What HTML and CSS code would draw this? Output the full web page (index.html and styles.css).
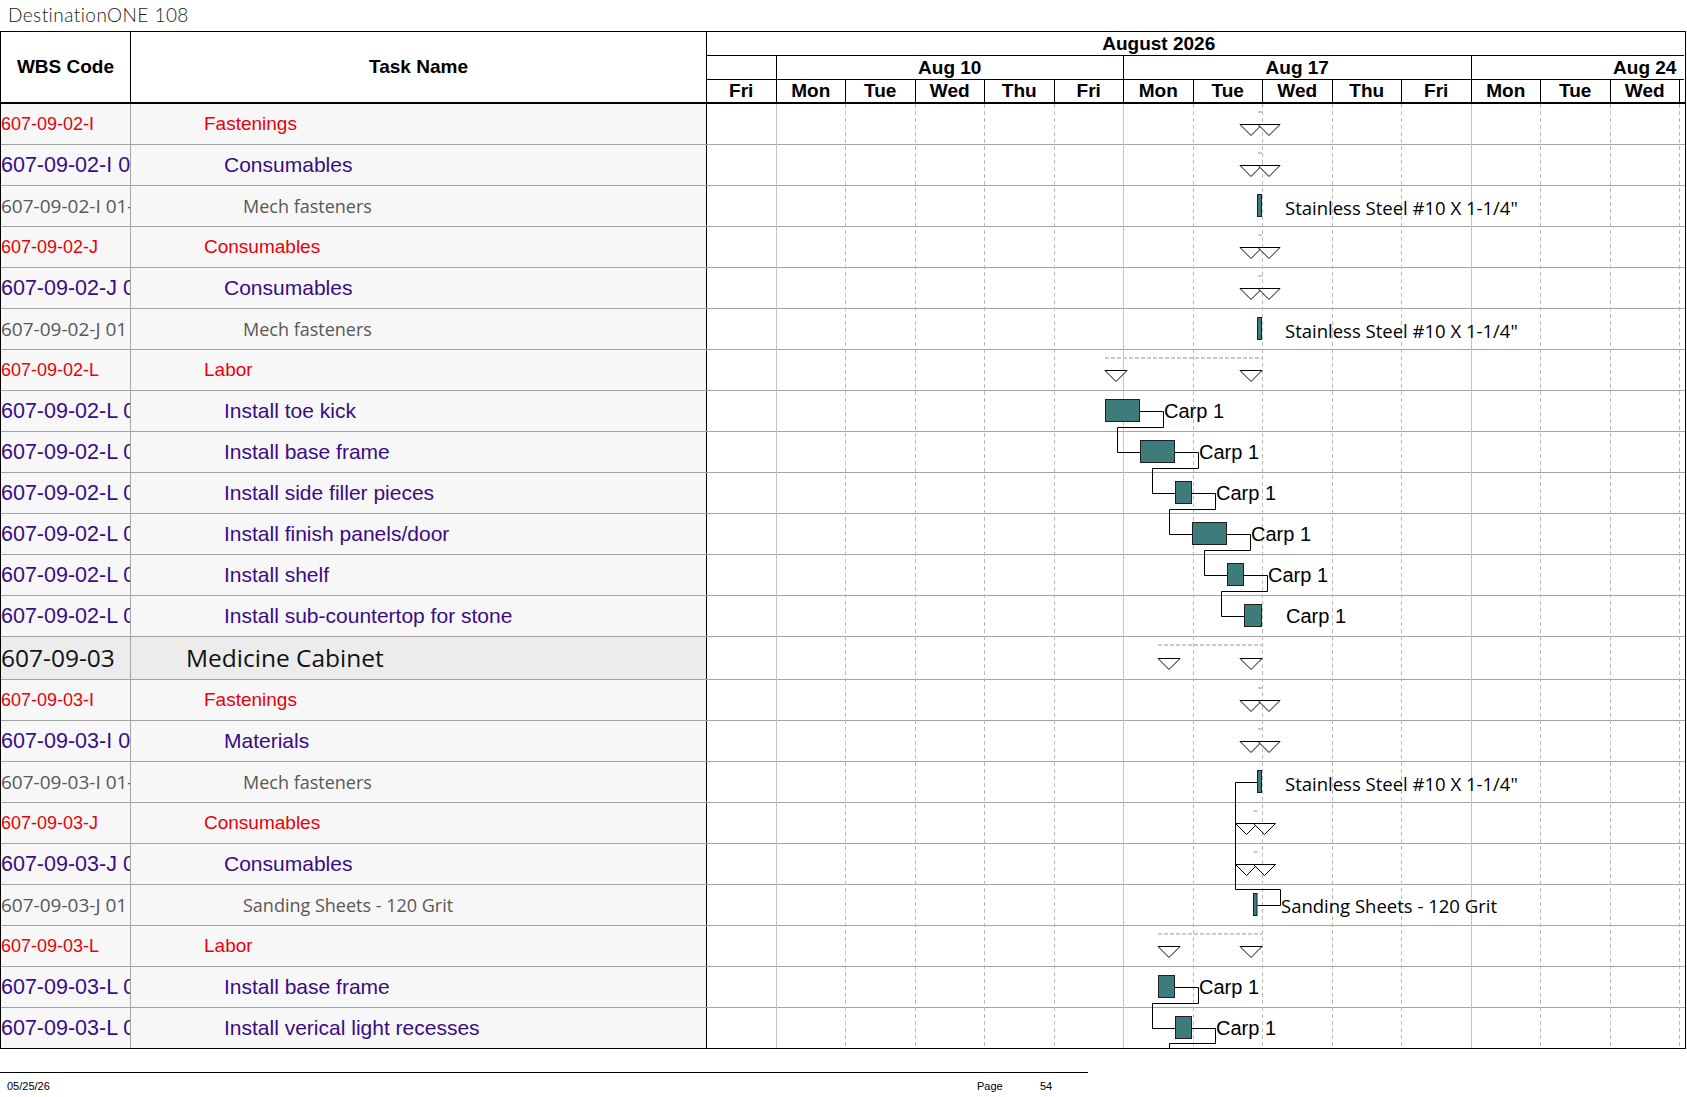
FILE: index.html
```html
<!DOCTYPE html>
<html lang="en">
<head>
<meta charset="utf-8">
<title>DestinationONE 108</title>
<link rel="stylesheet" href="styles.css">
</head>
<body>
<div class="title">DestinationONE 108</div>
<div class="sheet">
  <div class="head">
    <div class="hcell">WBS Code</div>
    <div class="hcell">Task Name</div>
    <div class="timescale">
      <div class="ts-month"><span>August 2026</span></div>
      <div class="ts-weeks">
        <div class="wk partial"></div>
        <div class="wk">Aug 10</div>
        <div class="wk">Aug 17</div>
        <div class="wk">Aug 24</div>
      </div>
      <div class="ts-days">
        <div class="day">Fri</div>
        <div class="day">Mon</div>
        <div class="day">Tue</div>
        <div class="day">Wed</div>
        <div class="day">Thu</div>
        <div class="day">Fri</div>
        <div class="day">Mon</div>
        <div class="day">Tue</div>
        <div class="day">Wed</div>
        <div class="day">Thu</div>
        <div class="day">Fri</div>
        <div class="day">Mon</div>
        <div class="day">Tue</div>
        <div class="day">Wed</div>
        <div class="day"></div>
      </div>
    </div>
  </div>
  <div class="body">
    <div class="row lv-red"><div class="c-wbs">607-09-02-I</div><div class="c-name">Fastenings</div><div class="c-chart"></div></div>
    <div class="row lv-pur"><div class="c-wbs">607-09-02-I 0</div><div class="c-name">Consumables</div><div class="c-chart"></div></div>
    <div class="row lv-gray"><div class="c-wbs">607-09-02-I 01-</div><div class="c-name">Mech fasteners</div><div class="c-chart"></div></div>
    <div class="row lv-red"><div class="c-wbs">607-09-02-J</div><div class="c-name">Consumables</div><div class="c-chart"></div></div>
    <div class="row lv-pur"><div class="c-wbs">607-09-02-J 0</div><div class="c-name">Consumables</div><div class="c-chart"></div></div>
    <div class="row lv-gray"><div class="c-wbs">607-09-02-J 01</div><div class="c-name">Mech fasteners</div><div class="c-chart"></div></div>
    <div class="row lv-red"><div class="c-wbs">607-09-02-L</div><div class="c-name">Labor</div><div class="c-chart"></div></div>
    <div class="row lv-pur"><div class="c-wbs">607-09-02-L 0</div><div class="c-name">Install toe kick</div><div class="c-chart"></div></div>
    <div class="row lv-pur"><div class="c-wbs">607-09-02-L 0</div><div class="c-name">Install base frame</div><div class="c-chart"></div></div>
    <div class="row lv-pur"><div class="c-wbs">607-09-02-L 0</div><div class="c-name">Install side filler pieces</div><div class="c-chart"></div></div>
    <div class="row lv-pur"><div class="c-wbs">607-09-02-L 0</div><div class="c-name">Install finish panels/door</div><div class="c-chart"></div></div>
    <div class="row lv-pur"><div class="c-wbs">607-09-02-L 0</div><div class="c-name">Install shelf</div><div class="c-chart"></div></div>
    <div class="row lv-pur"><div class="c-wbs">607-09-02-L 0</div><div class="c-name">Install sub-countertop for stone</div><div class="c-chart"></div></div>
    <div class="row lv-big"><div class="c-wbs">607-09-03</div><div class="c-name">Medicine Cabinet</div><div class="c-chart"></div></div>
    <div class="row lv-red"><div class="c-wbs">607-09-03-I</div><div class="c-name">Fastenings</div><div class="c-chart"></div></div>
    <div class="row lv-pur"><div class="c-wbs">607-09-03-I 0</div><div class="c-name">Materials</div><div class="c-chart"></div></div>
    <div class="row lv-gray"><div class="c-wbs">607-09-03-I 01-</div><div class="c-name">Mech fasteners</div><div class="c-chart"></div></div>
    <div class="row lv-red"><div class="c-wbs">607-09-03-J</div><div class="c-name">Consumables</div><div class="c-chart"></div></div>
    <div class="row lv-pur"><div class="c-wbs">607-09-03-J 0</div><div class="c-name">Consumables</div><div class="c-chart"></div></div>
    <div class="row lv-gray"><div class="c-wbs">607-09-03-J 01</div><div class="c-name">Sanding Sheets - 120 Grit</div><div class="c-chart"></div></div>
    <div class="row lv-red"><div class="c-wbs">607-09-03-L</div><div class="c-name">Labor</div><div class="c-chart"></div></div>
    <div class="row lv-pur"><div class="c-wbs">607-09-03-L 0</div><div class="c-name">Install base frame</div><div class="c-chart"></div></div>
    <div class="row lv-pur last"><div class="c-wbs">607-09-03-L 0</div><div class="c-name">Install verical light recesses</div><div class="c-chart"></div></div>

    <svg class="gantt" viewBox="707 104 977 944" width="977" height="944" xmlns="http://www.w3.org/2000/svg">
      <defs>
        <polygon id="tri" points="0,0 22,0 11,11" fill="#fff" stroke="#000" stroke-width="1"/>
      </defs>
      <g class="grid-dash" shape-rendering="crispEdges">
        <line x1="845.5" y1="104" x2="845.5" y2="1048"/>
        <line x1="915" y1="104" x2="915" y2="1048"/>
        <line x1="984.5" y1="104" x2="984.5" y2="1048"/>
        <line x1="1054" y1="104" x2="1054" y2="1048"/>
        <line x1="1193" y1="104" x2="1193" y2="1048"/>
        <line x1="1262.5" y1="104" x2="1262.5" y2="1048"/>
        <line x1="1332" y1="104" x2="1332" y2="1048"/>
        <line x1="1401.5" y1="104" x2="1401.5" y2="1048"/>
        <line x1="1540.5" y1="104" x2="1540.5" y2="1048"/>
        <line x1="1610" y1="104" x2="1610" y2="1048"/>
        <line x1="1679.5" y1="104" x2="1679.5" y2="1048"/>
      </g>
      <g class="grid-solid" shape-rendering="crispEdges">
        <line x1="776" y1="104" x2="776" y2="1048"/>
        <line x1="1123.5" y1="104" x2="1123.5" y2="1048"/>
        <line x1="1471" y1="104" x2="1471" y2="1048"/>
      </g>

      <g class="sum-line">
        <line x1="1258" y1="112" x2="1262" y2="112"/>
        <line x1="1258" y1="153" x2="1262" y2="153"/>
        <line x1="1258" y1="235" x2="1262" y2="235"/>
        <line x1="1258" y1="276" x2="1262" y2="276"/>
        <line x1="1105" y1="358" x2="1262" y2="358"/>
        <line x1="1158" y1="645" x2="1262" y2="645"/>
        <line x1="1258" y1="688" x2="1262" y2="688"/>
        <line x1="1258" y1="729" x2="1262" y2="729"/>
        <line x1="1253.5" y1="811" x2="1257.5" y2="811"/>
        <line x1="1253.5" y1="852" x2="1257.5" y2="852"/>
        <line x1="1158" y1="934" x2="1262" y2="934"/>
      </g>

      <g class="links">
        <path d="M1140,411.5 H1163.5 V427.5 H1117.5 V452.5 H1140"/>
        <path d="M1175,452.5 H1198.5 V468.5 H1152.5 V493.5 H1175"/>
        <path d="M1192,493.5 H1215.5 V509.5 H1169.5 V534.5 H1192"/>
        <path d="M1227,534.5 H1250.5 V550.5 H1204.5 V575.5 H1227"/>
        <path d="M1244,575.5 H1267.5 V591.5 H1221.5 V616.5 H1244"/>
        <path d="M1257,782.5 H1235.5 V889.5 H1280.5 V905.5 H1257.5"/>
        <path d="M1175,987.5 H1198.5 V1003.5 H1152.5 V1028.5 H1175"/>
        <path d="M1192,1028.5 H1215.5 V1043.5 H1169.5 V1060"/>
      </g>

      <use href="#tri" x="1240" y="124.5"/><use href="#tri" x="1258" y="124.5"/>
      <use href="#tri" x="1240" y="165.5"/><use href="#tri" x="1258" y="165.5"/>
      <use href="#tri" x="1240" y="247.5"/><use href="#tri" x="1258" y="247.5"/>
      <use href="#tri" x="1240" y="288.5"/><use href="#tri" x="1258" y="288.5"/>
      <use href="#tri" x="1105" y="370.5"/><use href="#tri" x="1240" y="370.5"/>
      <use href="#tri" x="1158" y="658.5"/><use href="#tri" x="1240" y="658.5"/>
      <use href="#tri" x="1240" y="700.5"/><use href="#tri" x="1258" y="700.5"/>
      <use href="#tri" x="1240" y="741.5"/><use href="#tri" x="1258" y="741.5"/>
      <use href="#tri" x="1235.5" y="823.5"/><use href="#tri" x="1253.5" y="823.5"/>
      <use href="#tri" x="1235.5" y="864.5"/><use href="#tri" x="1253.5" y="864.5"/>
      <use href="#tri" x="1158" y="946.5"/><use href="#tri" x="1240" y="946.5"/>

      <g class="bars">
        <rect x="1257.5" y="194.5" width="4" height="22"/>
        <rect x="1257.5" y="317.5" width="4" height="22"/>
        <rect x="1105.5" y="399.5" width="34" height="22"/>
        <rect x="1140.5" y="440.5" width="34" height="22"/>
        <rect x="1175.5" y="481.5" width="16" height="22"/>
        <rect x="1192.5" y="522.5" width="34" height="22"/>
        <rect x="1227.5" y="563.5" width="16" height="22"/>
        <rect x="1244.5" y="604.5" width="17" height="22"/>
        <rect x="1257.5" y="770.5" width="4" height="22"/>
        <rect x="1253.5" y="893.5" width="3.5" height="22"/>
        <rect x="1158.5" y="975.5" width="16" height="22"/>
        <rect x="1175.5" y="1016.5" width="16" height="22"/>
      </g>

      <g class="res">
        <text x="1164" y="418">Carp 1</text>
        <text x="1199" y="459">Carp 1</text>
        <text x="1216" y="500">Carp 1</text>
        <text x="1251" y="541">Carp 1</text>
        <text x="1268" y="582">Carp 1</text>
        <text x="1286" y="623">Carp 1</text>
        <text x="1199" y="994">Carp 1</text>
        <text x="1216" y="1035">Carp 1</text>
      </g>
      <g class="mat">
        <text x="1285" y="214.5">Stainless Steel #10 X 1-1/4"</text>
        <text x="1285" y="337.5">Stainless Steel #10 X 1-1/4"</text>
        <text x="1285" y="790.5">Stainless Steel #10 X 1-1/4"</text>
        <text x="1281" y="912.5">Sanding Sheets - 120 Grit</text>
      </g>
    </svg>
  </div>
</div>
<div class="footer">
  <span class="f-date">05/25/26</span>
  <span class="f-page">Page</span>
  <span class="f-num">54</span>
</div>
</body>
</html>
```
FILE: styles.css
```css
* {
  box-sizing: border-box;
}

body {
  margin: 0;
  background: #fff;
  color: #000;
  font-family: "Liberation Sans", Arial, sans-serif;
}

.title {
  height: 31px;
  padding-left: 8px;
  font-family: Lato, "Liberation Sans", sans-serif;
  font-weight: 300;
  font-size: 19px;
  letter-spacing: 0.45px;
  line-height: 30px;
  color: #1a1a1a;
  white-space: nowrap;
}

.sheet {
  width: 1686px;
  border: 1px solid #000;
}

/* ---------- header ---------- */
.head {
  display: grid;
  grid-template-columns: 130px 576px 977px;
  height: 72px;
  border-bottom: 2px solid #000;
}

.hcell {
  display: flex;
  align-items: center;
  justify-content: center;
  font-weight: bold;
  font-size: 19px;
  border-right: 1px solid #000;
}

.timescale {
  overflow: hidden;
  display: flex;
  flex-direction: column;
  font-weight: bold;
  font-size: 19px;
  white-space: nowrap;
}

.ts-month {
  height: 24px;
  border-bottom: 1px solid #000;
  overflow: hidden;
}

.ts-month span {
  display: block;
  width: 1459.5px;
  margin-left: -278px;
  text-align: center;
  line-height: 23px;
}

.ts-weeks {
  height: 24px;
  border-bottom: 1px solid #000;
  display: flex;
  overflow: hidden;
}

.wk {
  flex: none;
  width: 347.5px;
  border-right: 1px solid #000;
  text-align: center;
  line-height: 23px;
}

.wk.partial {
  width: 69.5px;
}

.ts-days {
  height: 22px;
  display: flex;
  overflow: hidden;
}

.day {
  flex: none;
  width: 69.5px;
  border-right: 1px solid #000;
  text-align: center;
  line-height: 22px;
}

/* ---------- body rows ---------- */
.body {
  position: relative;
}

.row {
  display: grid;
  grid-template-columns: 130px 576px 977px;
  height: 41px;
  border-bottom: 1px solid #a3a3a3;
}

.row.last {
  height: 40px;
  border-bottom: none;
}

.row > div {
  overflow: hidden;
  white-space: nowrap;
  line-height: 40px;
}

.c-wbs {
  background: #f7f7f7;
  border-right: 1px solid #a3a3a3;
}

.c-name {
  background: #f7f7f7;
  border-right: 1px solid #000;
}

.c-chart {
  background: #fff;
}

.lv-red {
  color: #e8000b;
}
.lv-red .c-wbs {
  font-size: 18px;
}
.lv-red .c-name {
  font-size: 19px;
  padding-left: 73px;
}

.lv-pur {
  color: #3b0b85;
  font-size: 21px;
}
.lv-pur .c-wbs {
  font-size: 21.5px;
}
.lv-pur .c-name {
  padding-left: 93px;
}

.lv-gray {
  color: #585858;
  font-family: "Open Sans", "Liberation Sans", sans-serif;
  font-size: 18px;
}
.lv-gray .c-wbs {
  font-size: 19px;
}
.lv-gray .c-name {
  padding-left: 112px;
}

.lv-big {
  height: 43px;
  color: #111;
  font-family: "Open Sans", "Liberation Sans", sans-serif;
  font-size: 24.5px;
}
.lv-big > div {
  line-height: 42px;
}
.lv-big .c-wbs,
.lv-big .c-name {
  background: #ececec;
}
.lv-big .c-name {
  padding-left: 55px;
}

/* ---------- gantt drawing ---------- */
.gantt {
  position: absolute;
  left: 706px;
  top: 0;
  overflow: hidden;
}

.grid-dash line {
  stroke: #b9b9b9;
  stroke-width: 1;
  stroke-dasharray: 4 3;
}

.grid-solid line {
  stroke: #c4c4c4;
  stroke-width: 1;
}

.sum-line line {
  stroke: #cacaca;
  stroke-width: 2;
  stroke-dasharray: 4 2;
}

.links path {
  fill: none;
  stroke: #000;
  stroke-width: 1;
}

.bars rect {
  fill: #3e7b7b;
  stroke: #1e1e1e;
  stroke-width: 1;
}

.res text {
  font-family: "Liberation Sans", Arial, sans-serif;
  font-size: 20px;
  fill: #000;
}

.mat text {
  font-family: "Open Sans", "Liberation Sans", sans-serif;
  font-size: 18.5px;
  fill: #000;
}

/* ---------- footer ---------- */
.footer {
  width: 1088px;
  margin-top: 23px;
  border-top: 1px solid #000;
  display: flex;
  font-size: 11px;
  line-height: 26px;
  color: #000;
}

.f-date {
  margin-left: 7px;
  width: 970px;
}

.f-page {
  width: 63px;
}
```
